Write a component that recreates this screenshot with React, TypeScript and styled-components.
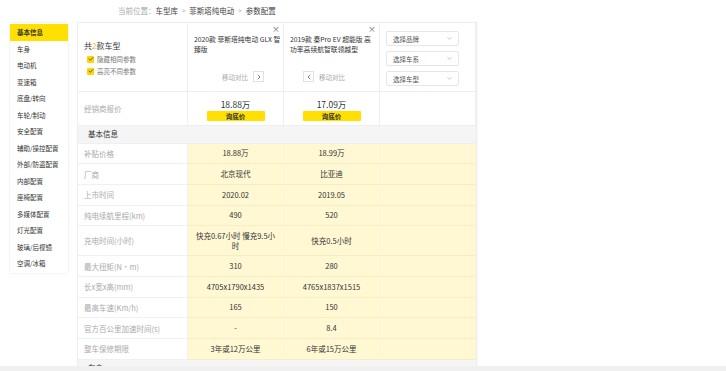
import React from "react";
import styled, { createGlobalStyle } from "styled-components";
import { ChevronDown, ChevronLeft, ChevronRight, Check } from "lucide-react";

const GlobalStyle = createGlobalStyle`
  html, body {
    margin: 0;
    padding: 0;
    background: #fff;
  }
  body {
    font-family: "Noto Sans CJK SC", "Noto Sans", sans-serif;
    color: #333;
  }
`;

const Page = styled.div`
  height: 100vh;
  display: flex;
  flex-direction: column;
  overflow: hidden;
`;

const Content = styled.div`
  flex: 1;
  overflow: hidden;
`;

const ScrollStrip = styled.div`
  height: 5px;
  flex-shrink: 0;
  background: #f0f0f0;
`;

const Breadcrumb = styled.div`
  height: 23px;
  padding-left: 118px;
  display: flex;
  align-items: center;
  font-size: 7.5px;
  color: #aaa;
  padding-bottom: 2px;
  box-sizing: border-box;
`;

const Crumb = styled.span`
  color: #444;
`;

const Sep = styled.span`
  color: #999;
  margin: 0 4px;
  font-size: 6px;
`;

const Body = styled.div`
  display: flex;
  align-items: flex-start;
  gap: 10px;
  padding-left: 10px;
`;

const Sidebar = styled.ul`
  width: 58px;
  margin: 0;
  padding: 1px 0;
  list-style: none;
  background: #fff;
  box-shadow: 0 0 2px rgba(0, 0, 0, 0.12);
`;

const NavItem = styled.li<{ $active?: boolean }>`
  height: 16.5px;
  line-height: 16.5px;
  padding-left: 7px;
  font-size: 6.5px;
  color: #333;
  white-space: nowrap;
  background: ${(p) => (p.$active ? "#ffe000" : "transparent")};
  font-weight: ${(p) => (p.$active ? 600 : 400)};
`;

const Table = styled.div`
  width: 398px;
  display: grid;
  grid-template-columns: 110px 96px 96px 96px;
  box-shadow: 0 0 0 1px #eeeeee, 1px 0 3px rgba(0, 0, 0, 0.06);
`;

const HeadCell = styled.div<{ $h: number }>`
  height: ${(p) => p.$h}px;
  box-sizing: border-box;
  border-right: 1px solid #eee;
  border-bottom: 1px solid #eee;
  background: #fff;
  position: relative;
`;

const CountBlock = styled.div`
  height: 100%;
  padding: 2px 0 0 6px;
  box-sizing: border-box;
  display: flex;
  flex-direction: column;
  justify-content: center;
  gap: 1px;
`;

const CountTitle = styled.div`
  font-size: 8px;
  line-height: 12px;
  color: #333;
  margin-bottom: 1px;

  em {
    font-style: normal;
    color: #f2b400;
  }
`;

const CheckRow = styled.label`
  display: flex;
  align-items: center;
  gap: 3px;
  padding-left: 3px;
  font-size: 6.5px;
  line-height: 11px;
  color: #777;
`;

const CheckBox = styled.span`
  width: 7px;
  height: 7px;
  border-radius: 1px;
  background: #ffd600;
  display: inline-flex;
  align-items: center;
  justify-content: center;
  color: #333;
`;

const CarBlock = styled.div<{ $padRight: number }>`
  height: 100%;
  padding: 11px ${(p) => p.$padRight}px 9px 6px;
  box-sizing: border-box;
  display: flex;
  flex-direction: column;
`;

const CarName = styled.div`
  font-size: 6.8px;
  line-height: 10px;
  color: #333;
`;

const CloseBtn = styled.span`
  position: absolute;
  top: 1px;
  right: 3px;
  font-size: 8px;
  line-height: 10px;
  color: #666;
`;

const MoveRow = styled.div<{ $side: "left" | "right" }>`
  margin-top: auto;
  display: flex;
  align-items: center;
  gap: 5px;
  justify-content: ${(p) => (p.$side === "right" ? "flex-end" : "flex-start")};
  padding: ${(p) => (p.$side === "right" ? "0 19px 0 0" : "0 0 0 13px")};
  font-size: 6.5px;
  color: #aaa;
`;

const MoveBtn = styled.span`
  width: 11px;
  height: 11px;
  box-sizing: border-box;
  border: 1px solid #e2e2e2;
  background: #fff;
  display: inline-flex;
  align-items: center;
  justify-content: center;
  color: #444;
`;

const SelectStack = styled.div`
  display: flex;
  flex-direction: column;
  gap: 5px;
  padding: 8px 0 0 6px;
`;

const Select = styled.div`
  width: 73px;
  height: 15px;
  box-sizing: border-box;
  border: 1px solid #e6e6e6;
  border-radius: 2px;
  padding: 0 5px 0 6px;
  display: flex;
  align-items: center;
  justify-content: space-between;
  font-size: 6.5px;
  color: #555;
`;

const PriceBlock = styled.div`
  height: 100%;
  display: flex;
  flex-direction: column;
  align-items: center;
  justify-content: center;
  gap: 1px;
  padding-top: 2px;
  box-sizing: border-box;
`;

const Price = styled.div`
  font-size: 8.5px;
  line-height: 12px;
  color: #333;
`;

const AskButton = styled.div`
  width: 58px;
  height: 10px;
  line-height: 10px;
  background: #ffe000;
  border-radius: 1px;
  text-align: center;
  font-size: 6.5px;
  font-weight: 600;
  color: #333;
`;

const LabelCell = styled.div<{ $h: number }>`
  height: ${(p) => p.$h}px;
  box-sizing: border-box;
  border-right: 1px solid #f0f0f0;
  border-bottom: 1px solid #f0f0f0;
  background: #fff;
  padding-left: 6px;
  display: flex;
  align-items: center;
  font-size: 7.5px;
  color: #aaa;
  white-space: nowrap;
`;

const ValueCell = styled.div<{ $h: number }>`
  height: ${(p) => p.$h}px;
  box-sizing: border-box;
  border-right: 1px solid #fbf4d8;
  border-bottom: 1px solid #f5edc4;
  background: #fff8d3;
  padding: 0 6px;
  display: flex;
  align-items: center;
  justify-content: center;
  text-align: center;
  font-size: 7.5px;
  line-height: 10px;
  color: #333;
`;

const SectionRow = styled.div`
  grid-column: 1 / -1;
  height: 16.5px;
  line-height: 16.5px;
  background: #f5f5f5;
  padding-left: 10px;
  font-size: 7.5px;
  color: #333;
  border-bottom: 1px solid #f0f0f0;
`;

const navItems = [
  "基本信息",
  "车身",
  "电动机",
  "变速箱",
  "底盘/转向",
  "车轮/制动",
  "安全配置",
  "辅助/操控配置",
  "外部/防盗配置",
  "内部配置",
  "座椅配置",
  "多媒体配置",
  "灯光配置",
  "玻璃/后视镜",
  "空调/冰箱",
];

type Row = { label: string; values: string[]; tall?: boolean };

const basicRows: Row[] = [
  { label: "补贴价格", values: ["18.88万", "18.99万"] },
  { label: "厂商", values: ["北京现代", "比亚迪"] },
  { label: "上市时间", values: ["2020.02", "2019.05"] },
  { label: "纯电续航里程(km)", values: ["490", "520"] },
  { label: "充电时间(小时)", values: ["快充0.67小时 慢充9.5小时", "快充0.5小时"], tall: true },
  { label: "最大扭矩(N·m)", values: ["310", "280"] },
  { label: "长x宽x高(mm)", values: ["4705x1790x1435", "4765x1837x1515"] },
  { label: "最高车速(Km/h)", values: ["165", "150"] },
  { label: "官方百公里加速时间(s)", values: ["-", "8.4"] },
  { label: "整车保修期限", values: ["3年或12万公里", "6年或15万公里"] },
];

const DataRows = ({ rows }: { rows: Row[] }) => (
  <>
    {rows.map((row) => {
      const h = row.tall ? 30 : 20.7;
      return (
        <React.Fragment key={row.label}>
          <LabelCell $h={h}>{row.label}</LabelCell>
          {row.values.map((v, i) => (
            <ValueCell key={i} $h={h}>
              {v}
            </ValueCell>
          ))}
          <ValueCell $h={h} />
        </React.Fragment>
      );
    })}
  </>
);

export default function App() {
  return (
    <Page>
      <GlobalStyle />
      <Content>
        <Breadcrumb>
          当前位置：<Crumb>车型库</Crumb>
          <Sep>&gt;</Sep>
          <Crumb>菲斯塔纯电动</Crumb>
          <Sep>&gt;</Sep>
          <Crumb>参数配置</Crumb>
        </Breadcrumb>
        <Body>
          <Sidebar>
            {navItems.map((item, i) => (
              <NavItem key={item} $active={i === 0}>
                {item}
              </NavItem>
            ))}
          </Sidebar>
          <Table>
            <HeadCell $h={69}>
              <CountBlock>
                <CountTitle>
                  共<em>2</em>款车型
                </CountTitle>
                <CheckRow>
                  <CheckBox>
                    <Check size={6} strokeWidth={3} />
                  </CheckBox>
                  隐藏相同参数
                </CheckRow>
                <CheckRow>
                  <CheckBox>
                    <Check size={6} strokeWidth={3} />
                  </CheckBox>
                  高亮不同参数
                </CheckRow>
              </CountBlock>
            </HeadCell>
            <HeadCell $h={69}>
              <CloseBtn>×</CloseBtn>
              <CarBlock $padRight={0}>
                <CarName>2020款 菲斯塔纯电动 GLX 智臻版</CarName>
                <MoveRow $side="right">
                  移动对比
                  <MoveBtn>
                    <ChevronRight size={8} strokeWidth={2} />
                  </MoveBtn>
                </MoveRow>
              </CarBlock>
            </HeadCell>
            <HeadCell $h={69}>
              <CloseBtn>×</CloseBtn>
              <CarBlock $padRight={3}>
                <CarName>2019款 秦Pro EV 超能版 高功率高续航智联领越型</CarName>
                <MoveRow $side="left">
                  <MoveBtn>
                    <ChevronLeft size={8} strokeWidth={2} />
                  </MoveBtn>
                  移动对比
                </MoveRow>
              </CarBlock>
            </HeadCell>
            <HeadCell $h={69}>
              <SelectStack>
                {["选择品牌", "选择车系", "选择车型"].map((s) => (
                  <Select key={s}>
                    {s}
                    <ChevronDown size={7} color="#999" />
                  </Select>
                ))}
              </SelectStack>
            </HeadCell>

            <LabelCell $h={34}>经销商报价</LabelCell>
            <HeadCell $h={34}>
              <PriceBlock>
                <Price>18.88万</Price>
                <AskButton>询底价</AskButton>
              </PriceBlock>
            </HeadCell>
            <HeadCell $h={34}>
              <PriceBlock>
                <Price>17.09万</Price>
                <AskButton>询底价</AskButton>
              </PriceBlock>
            </HeadCell>
            <HeadCell $h={34} />

            <SectionRow>基本信息</SectionRow>
            <DataRows rows={basicRows} />
            <SectionRow>车身</SectionRow>
          </Table>
        </Body>
      </Content>
      <ScrollStrip />
    </Page>
  );
}
